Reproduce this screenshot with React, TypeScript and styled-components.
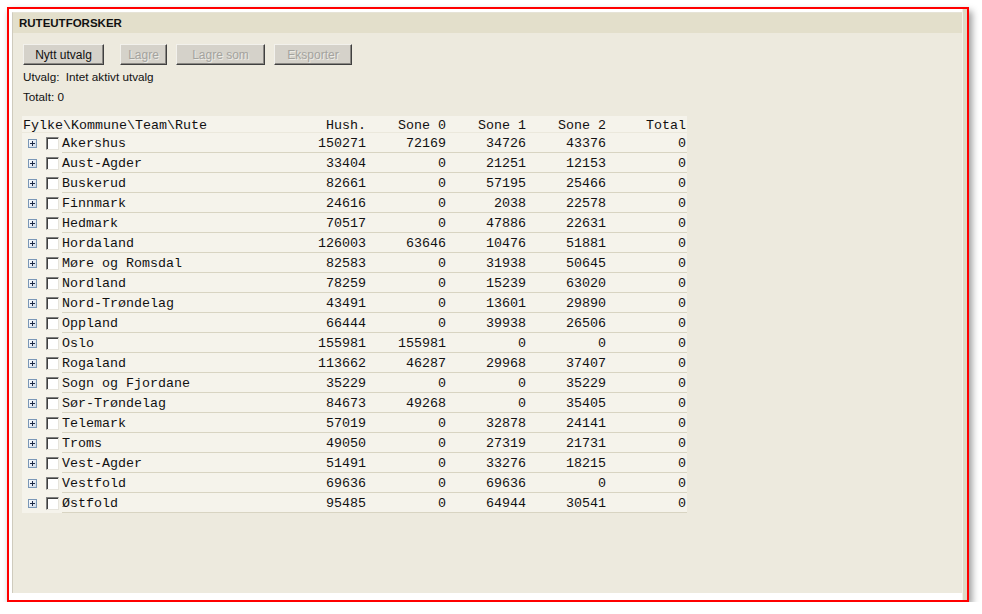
import React from "react";
import styled, { createGlobalStyle } from "styled-components";

const Global = createGlobalStyle`
  html, body { margin: 0; padding: 0; background: #ffffff; }
  body { font-family: "Liberation Sans", Arial, sans-serif; }
`;

const Page = styled.div`
  padding: 7px 0 0 7px;
`;

const Frame = styled.div`
  width: 962px;
  height: 595px;
  box-sizing: border-box;
  border: 2px solid #ff0000;
  box-shadow: 3px 4px 7px rgba(0, 0, 0, 0.4);
  display: flex;
  background: #ffffff;
`;

const Main = styled.div`
  flex: 1;
  display: flex;
  padding: 3px 0 7px 3px;
  background: #ffffff;
`;

const Gutter = styled.div`
  width: 4px;
  background: #dedac6;
  border-left: 1px solid #f4f2ea;
`;

const Panel = styled.div`
  flex: 1;
  display: flex;
  flex-direction: column;
  border-left: 1px solid #cfcbbd;
  border-top: 1px solid #e6e3d6;
  background: #edeade;
`;

const TitleBar = styled.div`
  height: 20px;
  background: #e3dfcb;
  display: flex;
  align-items: center;
  padding-left: 6px;
  font-family: "Liberation Sans", Arial, sans-serif;
  font-weight: bold;
  font-size: 11.5px;
  color: #111;
`;

const Body = styled.div`
  padding: 11px 10px 0 10px;
`;

const Toolbar = styled.div`
  display: flex;
  align-items: flex-start;
  height: 22px;
`;

const Button = styled.button<{ $gap: number; $w: number }>`
  width: ${(p) => p.$w}px;
  height: 21px;
  padding: 0;
  margin: 0 ${(p) => p.$gap}px 0 0;
  background: #d5d2ca;
  border: 1px solid;
  border-color: #f2f1ec #404040 #404040 #f2f1ec;
  box-shadow: inset -1px -1px 0 #8a8883;
  font-family: "Liberation Sans", Arial, sans-serif;
  font-size: 12px;
  color: ${(p) => (p.disabled ? "#a4a39e" : "#111")};
  text-shadow: ${(p) => (p.disabled ? "1px 1px 0 #ecebe6" : "none")};
  cursor: default;
`;

const InfoLine = styled.div`
  height: 20px;
  line-height: 21px;
  font-family: "Liberation Sans", Arial, sans-serif;
  font-size: 11.7px;
  color: #111;
  white-space: pre;
`;

const Table = styled.div`
  margin: 10px 0 0 -1px;
  width: 665px;
  background: #f5f3eb;
  font-family: "Liberation Mono", "Courier New", monospace;
  font-size: 13.33px;
  color: #111;
`;

const HeadRow = styled.div`
  display: grid;
  grid-template-columns: 265px repeat(5, 80px);
  height: 17px;
  box-sizing: border-box;
  border-bottom: 1px solid #ebe8dc;
  align-items: center;
`;

const HeadCell = styled.div<{ $right?: boolean }>`
  text-align: ${(p) => (p.$right ? "right" : "left")};
  padding: ${(p) => (p.$right ? "2px 1px 0 0" : "2px 0 0 1px")};
  white-space: pre;
  line-height: 16px;
  color: #111;
`;

const Row = styled.div`
  display: grid;
  grid-template-columns: 40px 225px repeat(5, 80px);
  height: 20px;
`;

const IconCell = styled.div`
  display: flex;
  align-items: center;
  padding-left: 6px;
  gap: 9px;
`;

const Cell = styled.div<{ $right?: boolean }>`
  display: flex;
  align-items: center;
  justify-content: ${(p) => (p.$right ? "flex-end" : "flex-start")};
  padding: 2px ${(p) => (p.$right ? "1px" : "0")} 0 0;
  border-bottom: 1px solid #d8d4c2;
  white-space: pre;
  line-height: 17px;
`;

const Check = styled.span`
  width: 13px;
  height: 13px;
  box-sizing: border-box;
  border: 1px solid;
  border-color: #7f7f7f #e6e4dc #e6e4dc #7f7f7f;
  box-shadow: inset 1px 1px 0 #404040;
  background: #ffffff;
`;

const ExpandIcon = () => (
  <svg width="9" height="9" viewBox="0 0 9 9">
    <defs>
      <linearGradient id="eg" x1="0" y1="0" x2="1" y2="1">
        <stop offset="0" stopColor="#ffffff" />
        <stop offset="1" stopColor="#c9d6e6" />
      </linearGradient>
    </defs>
    <rect x="0.5" y="0.5" width="8" height="8" fill="url(#eg)" stroke="#7a97b7" />
    <line x1="2" y1="4.5" x2="7" y2="4.5" stroke="#1b2a48" />
    <line x1="4.5" y1="2" x2="4.5" y2="7" stroke="#1b2a48" />
  </svg>
);

const rows: [string, number, number, number, number, number][] = [
  ["Akershus", 150271, 72169, 34726, 43376, 0],
  ["Aust-Agder", 33404, 0, 21251, 12153, 0],
  ["Buskerud", 82661, 0, 57195, 25466, 0],
  ["Finnmark", 24616, 0, 2038, 22578, 0],
  ["Hedmark", 70517, 0, 47886, 22631, 0],
  ["Hordaland", 126003, 63646, 10476, 51881, 0],
  ["Møre og Romsdal", 82583, 0, 31938, 50645, 0],
  ["Nordland", 78259, 0, 15239, 63020, 0],
  ["Nord-Trøndelag", 43491, 0, 13601, 29890, 0],
  ["Oppland", 66444, 0, 39938, 26506, 0],
  ["Oslo", 155981, 155981, 0, 0, 0],
  ["Rogaland", 113662, 46287, 29968, 37407, 0],
  ["Sogn og Fjordane", 35229, 0, 0, 35229, 0],
  ["Sør-Trøndelag", 84673, 49268, 0, 35405, 0],
  ["Telemark", 57019, 0, 32878, 24141, 0],
  ["Troms", 49050, 0, 27319, 21731, 0],
  ["Vest-Agder", 51491, 0, 33276, 18215, 0],
  ["Vestfold", 69636, 0, 69636, 0, 0],
  ["Østfold", 95485, 0, 64944, 30541, 0],
];

export default function App() {
  return (
    <>
      <Global />
      <Page>
        <Frame>
          <Main>
            <Panel>
              <TitleBar>RUTEUTFORSKER</TitleBar>
              <Body>
                <Toolbar>
                  <Button $w={81} $gap={16}>
                    Nytt utvalg
                  </Button>
                  <Button $w={47} $gap={9} disabled>
                    Lagre
                  </Button>
                  <Button $w={89} $gap={9} disabled>
                    Lagre som
                  </Button>
                  <Button $w={78} $gap={0} disabled>
                    Eksporter
                  </Button>
                </Toolbar>
                <InfoLine>{"Utvalg:  Intet aktivt utvalg"}</InfoLine>
                <InfoLine>Totalt: 0</InfoLine>
                <Table>
                  <HeadRow>
                    <HeadCell>{"Fylke\\Kommune\\Team\\Rute"}</HeadCell>
                    <HeadCell $right>Hush.</HeadCell>
                    <HeadCell $right>Sone 0</HeadCell>
                    <HeadCell $right>Sone 1</HeadCell>
                    <HeadCell $right>Sone 2</HeadCell>
                    <HeadCell $right>Total</HeadCell>
                  </HeadRow>
                  {rows.map((r) => (
                    <Row key={r[0]}>
                      <IconCell>
                        <ExpandIcon />
                        <Check />
                      </IconCell>
                      <Cell>{r[0]}</Cell>
                      <Cell $right>{r[1]}</Cell>
                      <Cell $right>{r[2]}</Cell>
                      <Cell $right>{r[3]}</Cell>
                      <Cell $right>{r[4]}</Cell>
                      <Cell $right>{r[5]}</Cell>
                    </Row>
                  ))}
                </Table>
              </Body>
            </Panel>
          </Main>
          <Gutter />
        </Frame>
      </Page>
    </>
  );
}
